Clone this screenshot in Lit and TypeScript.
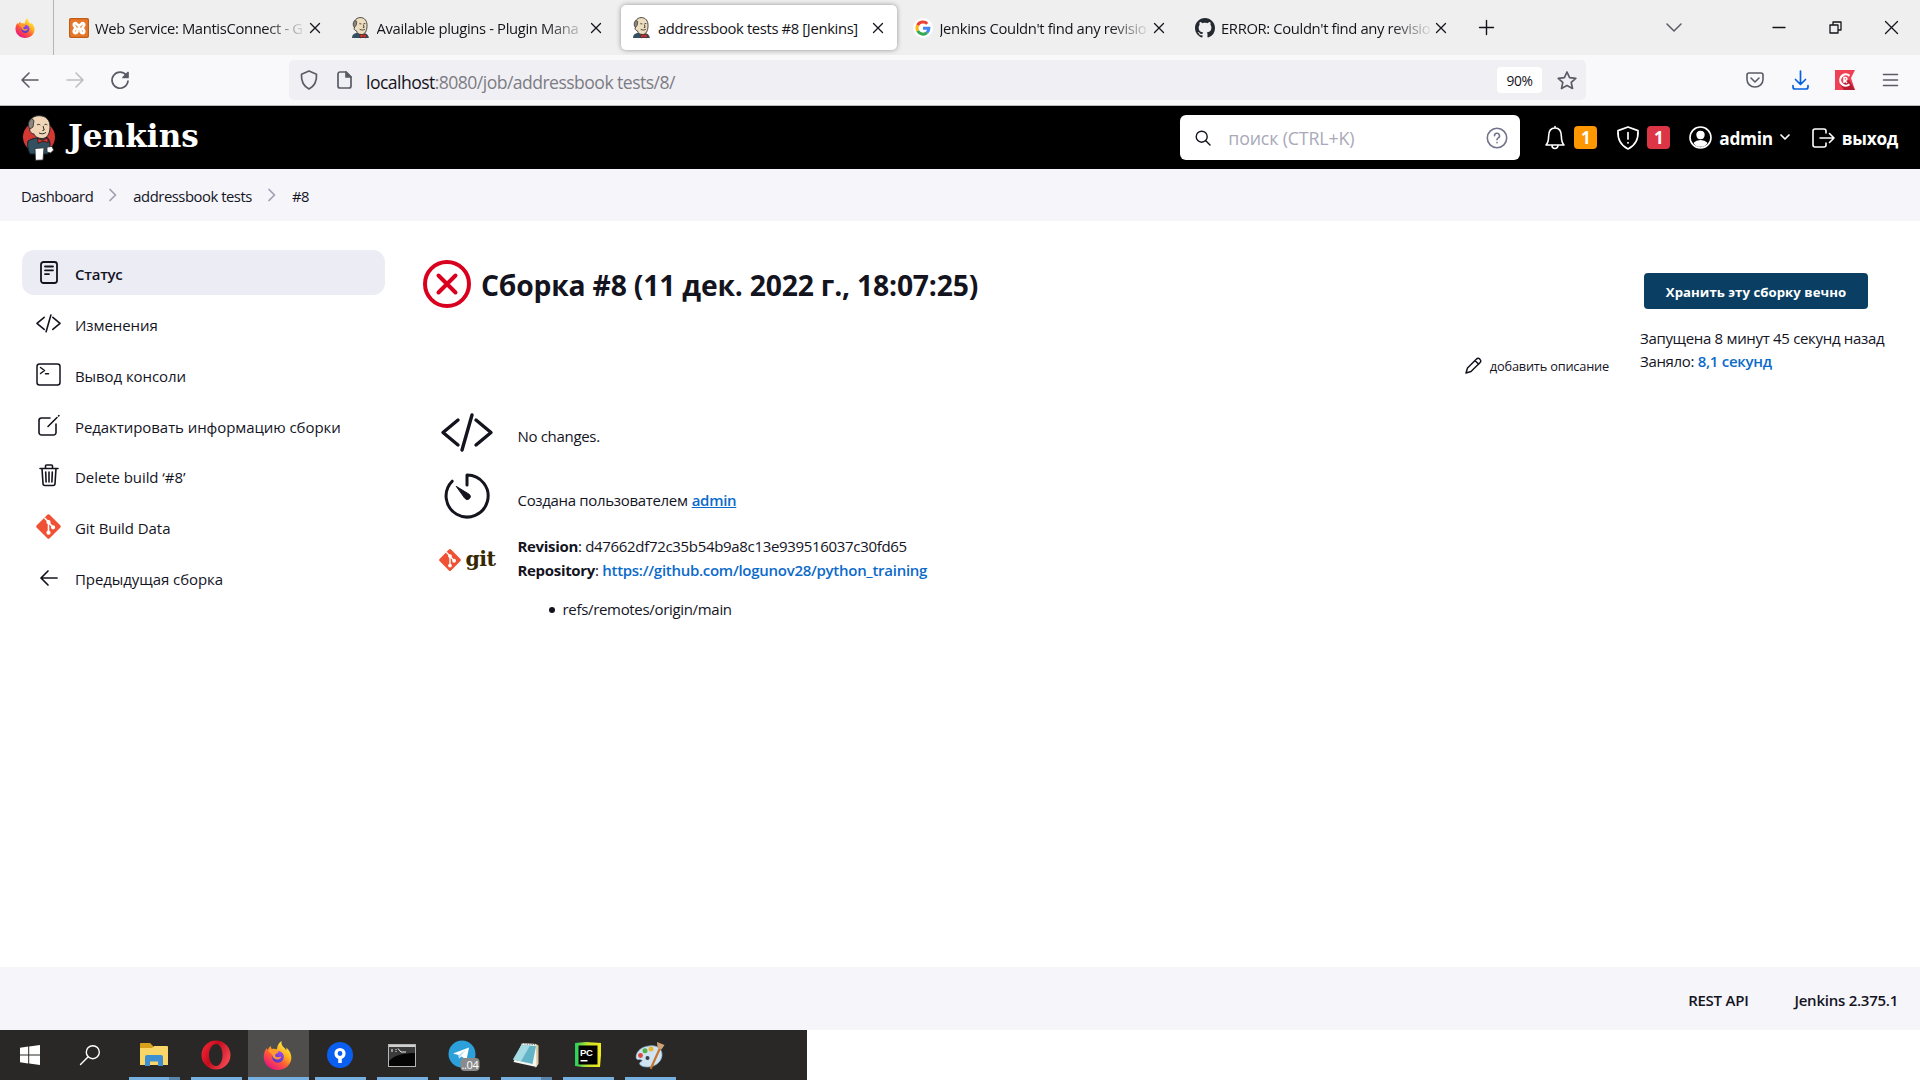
import { LitElement, html, svg, css, TemplateResult } from "lit";
import { customElement } from "lit/decorators.js";

/* ---------- line icons ---------- */
const stroke = (w: number, h: number, vb: string, sw: number, body: TemplateResult) => html`
  <svg width=${w} height=${h} viewBox=${vb} fill="none" stroke="currentColor" stroke-width=${sw}
    stroke-linecap="round" stroke-linejoin="round">${body}</svg>`;

const closeIcon = stroke(12, 12, "0 0 12 12", 1.3, svg`<path d="M1.5 1.5l9 9M10.500 1.500l-9 9"/>`);
const chevronRight = stroke(8, 14, "0 0 8 14", 1.7, svg`<path d="M1 1.500L6.500 7L1 12.500"/>`);
const codeIcon = (w: number, sw: number) =>
  stroke(w, w * 0.75, "0 0 52 39", sw, svg`<path d="M17 7L2 19.500L17 32M35 7L50 19.500L35 32M31 2L21 37"/>`);

/* ---------- colour pictures ---------- */
const firefox = (s: number) => html`
  <svg width=${s} height=${s} viewBox="0 0 32 32">
    <defs>
      <linearGradient id="fa" x1=".85" y1=".1" x2=".25" y2=".95">
        <stop offset="0" stop-color="#fff04a"/><stop offset=".35" stop-color="#ffb21f"/>
        <stop offset=".62" stop-color="#ff5b36"/><stop offset="1" stop-color="#e8177f"/>
      </linearGradient>
      <linearGradient id="fb" x1=".8" y1="0" x2=".3" y2="1">
        <stop offset="0" stop-color="#a24af0"/><stop offset="1" stop-color="#5136c8"/>
      </linearGradient>
    </defs>
    <path fill="url(#fa)" d="M20.500 0c-.7 3.300.6 5.200 2.800 7.400 1.200 1 1.900 2 2.200 3 .5-1 .4-2.200.2-3.200 3.600 3 5.600 7 5.600 11.300C31.300 26 24.700 32 16.300 32 7.600 32 .8 25.700.8 17.700c0-4 1-7.200 3.300-10.100.1 1 .4 1.600.9 2.200C5.800 8 7 6.600 8.600 5.500c0 1.300.4 2.500 1.200 3.300 2-.5 3.900-.3 5.600.4C15.600 5.300 17.500 2 20.500 0z"/>
    <circle cx="16.500" cy="17.500" r="6.600" fill="url(#fb)"/>
    <path fill="#ff9a2c" d="M5.500 10.500c2.200-1.600 5.300-2 8.500-.6 1 .5 2.600 1.700 3.300 2-.3 1.600-3 1.800-3.800 3.200-.6 1.400.4 2.700 2.200 2.800 2.200.1 3-.8 4.600-.4-1 2.600-4.500 3.600-7.200 2.200-2-1.100-3-3.200-3-5-1.200-.6-2.600-2.300-4.600-4.200z"/>
  </svg>`;

const butlerHead = html`
  <svg width="19" height="21" viewBox="0 0 19 21">
    <path fill="#335061" d="M1 21c0-3 1.500-4.600 5-5.200l7 .4c3 .5 4.600 2 4.900 4.800z"/>
    <path fill="#eedec0" stroke="#3a3530" stroke-width=".9" d="M3.600 10C2 5 4.500.8 9 .6c4.800-.2 7.300 3.500 7 8.600-.1 4.500-2 8.300-5.300 8.300-3.200 0-4.500-1.300-5.200-3.600C3.500 13.500 2.300 11.500 3.600 10z"/>
    <path fill="#8a8580" stroke="#3a3530" stroke-width=".7" d="M3.500 10.500C1.700 9 1.600 5.500 3.600 3.500L5.800 4.400 5.300 8z"/>
    <path fill="none" stroke="#3a3530" stroke-width=".9" d="M8.300 6.700l2 .2M12.600 6.500l1.800.2M12.300 7.500l.8 2.800-1.300.4M8.700 12.300c2 1 3.500.9 5.200 0"/>
    <path fill="#d33833" stroke="#5a1010" stroke-width=".5" d="M9 17.200l3 1 3-1.200v4l-3-1.200L9 21z"/>
  </svg>`;

const butler = html`
  <svg class="butler" width="34" height="46" viewBox="0 0 34 46">
    <ellipse cx="17" cy="22" rx="16" ry="15.500" fill="#d33833"/>
    <path fill="#335061" stroke="#10202a" stroke-width="1" d="M6 26c3-2 7-3 10-3l9-.5c2 1.600 3 3.600 3 7l-2 9.500H8C6 35.500 5 30 6 26z"/>
    <path fill="#f0d6b7" stroke="#2b2b2b" stroke-width="1" d="M8 13C6 6 10 .8 16.500.7 24 .5 28.300 5 28 12.500c-.2 6.500-3 11-8 11-4 0-7-1.800-8.200-4.600C8.700 18.500 7 15.500 8 13z"/>
    <path fill="#8b867f" stroke="#2b2b2b" stroke-width=".8" d="M8 14C5.500 11 6 6 9.500 3.600L12 5.500 11 12z"/>
    <path fill="none" stroke="#2b2b2b" stroke-width="1" d="M15 10c1-.8 2.300-.8 3.300 0M22.500 9.700c.9-.6 2-.5 2.800.2M21 11l1.200 4-1.800.6M17 18c2.700 1.200 5 1 7-.6"/>
    <path fill="#d33833" stroke="#3d0c0c" stroke-width=".8" d="M15.500 23.500l5 1.700 5.200-2.400.5 5-5-1.700-5 2.200z"/>
    <path fill="#fff" stroke="#2b2b2b" stroke-width=".8" d="M13 33.500l9-.7-1 12.200-7.500.3z"/>
    <path fill="#fff" stroke="#2b2b2b" stroke-width=".8" d="M25 32l5-.5 1.600 3.500-3 3-3.600-1z"/>
  </svg>`;

const gitDiamond = (s: number) => html`
  <svg width=${s} height=${s} viewBox="0 0 26 26">
    <rect x="4.200" y="4.200" width="17.600" height="17.600" rx="1.600" transform="rotate(45 13 13)" fill="#f05033"/>
    <g stroke="#fff" stroke-width="1.500" fill="#fff">
      <path fill="none" d="M9 4.600l4 4v10M13 9l4.200 4.600"/>
      <circle cx="13" cy="8.800" r="1.300"/><circle cx="13" cy="19" r="1.300"/><circle cx="17.400" cy="13.800" r="1.300"/>
    </g>
  </svg>`;

const xampp = html`
  <svg width="20" height="20" viewBox="0 0 20 20">
    <rect width="20" height="20" rx="2" fill="#e5782b"/><rect x=".6" y=".6" width="18.800" height="18.800" rx="1.800" fill="none" stroke="#c35c17" stroke-width="1.200"/>
    <path fill="none" stroke="#fff" stroke-width="2.700" stroke-linecap="round" stroke-linejoin="round"
      d="M8 6.200C6.500 4.600 4.600 5 4.800 7 4.900 8.600 6.400 8.600 6.400 10S4.900 11.600 4.800 13.200C4.700 15.600 7.500 15.600 8.400 13.600L8.600 11.200 10 10.200 11.400 11.200 11.600 13.600C12.500 15.600 15.300 15.600 15.200 13.200 15.100 11.600 13.600 11.400 13.600 10S15.100 8.600 15.200 7C15.400 5 13.500 4.600 12 6.200L10 8z"/>
  </svg>`;

const google = html`
  <svg width="20" height="20" viewBox="0 0 20 20"><circle cx="10" cy="10" r="10" fill="#fff"/>
    <g fill="none" stroke-width="3">
      <path stroke="#ea4335" d="M4.600 7.300A6 6 0 0 1 14.300 5.800"/><path stroke="#fbbc05" d="M4.600 7.300A6 6 0 0 0 4.700 12.900"/>
      <path stroke="#34a853" d="M4.700 12.900A6 6 0 0 0 14 14.600"/><path stroke="#4285f4" d="M10 10.200h5.900A6 6 0 0 1 14 14.600"/>
    </g></svg>`;

const github = html`
  <svg width="20" height="20" viewBox="0 0 16 16"><path fill="#24292f" d="M8 0C3.580 0 0 3.580 0 8c0 3.540 2.290 6.530 5.470 7.590.4.070.55-.17.55-.38 0-.19-.01-.82-.01-1.490-2.010.37-2.530-.49-2.690-.94-.09-.23-.48-.94-.82-1.130-.28-.15-.68-.52-.01-.53.63-.01 1.080.58 1.230.82.72 1.210 1.870.87 2.330.66.070-.52.28-.87.51-1.070-1.780-.2-3.640-.89-3.640-3.950 0-.87.31-1.590.82-2.150-.08-.2-.36-1.020.08-2.120 0 0 .67-.21 2.200.82.64-.18 1.320-.27 2-.27s1.360.09 2 .27c1.530-1.040 2.200-.82 2.200-.82.44 1.100.16 1.920.08 2.120.51.56.82 1.270.82 2.150 0 3.070-1.870 3.750-3.650 3.950.29.25.54.73.54 1.480 0 1.070-.01 1.930-.01 2.200 0 .21.15.46.55.38A8.010 8.010 0 0 0 16 8c0-4.420-3.580-8-8-8z"/></svg>`;

interface Tab { icon: TemplateResult; title: string; active?: boolean }
const tabs: Tab[] = [
  { icon: xampp, title: "Web Service: MantisConnect - G" },
  { icon: butlerHead, title: "Available plugins - Plugin Mana" },
  { icon: butlerHead, title: "addressbook tests #8 [Jenkins]", active: true },
  { icon: google, title: "Jenkins Couldn't find any revisio" },
  { icon: github, title: "ERROR: Couldn't find any revisio" },
];

const tasks: { icon: TemplateResult; label: string; active?: boolean }[] = [
  {
    icon: stroke(18, 23, "0 0 18 23", 1.8, svg`<rect x="1" y="1" width="16" height="21" rx="2.500"/><path d="M5 5.500h8M5 9.300h8M5 13.100h4"/>`),
    label: "Статус", active: true,
  },
  { icon: codeIcon(25, 3.3), label: "Изменения" },
  {
    icon: stroke(25, 23, "0 0 25 23", 1.5, svg`<rect x="1" y="1" width="23" height="21" rx="2.500"/><path d="M4.500 4.500L8.500 7.500L4.500 10.500M9.500 10.700h3"/>`),
    label: "Вывод консоли",
  },
  {
    icon: stroke(22, 22, "0 0 22 22", 1.6, svg`<path d="M12 4H3.500A2.500 2.500 0 0 0 1 6.500V18.500A2.500 2.500 0 0 0 3.500 21H15.500A2.500 2.500 0 0 0 18 18.500V10M10 12.500L19 3.500M20.600 1.900l.3-.3"/>`),
    label: "Редактировать информацию сборки",
  },
  {
    icon: stroke(20, 23, "0 0 20 23", 1.6, svg`<path d="M1 4.500h18M3 4.500l1 15a2 2 0 0 0 2 2h8a2 2 0 0 0 2-2l1-15M6.500 4.500V2a1 1 0 0 1 1-1h5a1 1 0 0 1 1 1V4.500M10 8v10M6.700 8l.4 10M13.300 8l-.4 10"/>`),
    label: "Delete build ‘#8’",
  },
  { icon: gitDiamond(27), label: "Git Build Data" },
  { icon: stroke(18, 16, "0 0 18 16", 1.7, svg`<path d="M8 1L1 8l7 7M1 8h16"/>`), label: "Предыдущая сборка" },
];

const folder = html`
  <svg width="28" height="24" viewBox="0 0 28 24">
    <path fill="#d9a11b" d="M0 1a1 1 0 0 1 1-1h9l3 3v4H0z"/><path fill="#f9d667" d="M0 5h12l2-2h13a1 1 0 0 1 1 1v18H0z"/>
    <path fill="#3d8fd1" d="M5 23V14a2 2 0 0 1 2-2h14a2 2 0 0 1 2 2v9h-5v-4.500h-8V23z"/>
  </svg>`;
const opera = html`
  <svg width="30" height="30" viewBox="0 0 30 30">
    <defs><linearGradient id="op" x1="0" x2="1" y1="0" y2=".5"><stop offset="0" stop-color="#ff2b3c"/><stop offset=".5" stop-color="#c40c1c"/><stop offset="1" stop-color="#f0424e"/></linearGradient></defs>
    <path fill="url(#op)" fill-rule="evenodd" d="M15 .5a14.500 14.500 0 1 0 0 29a14.500 14.500 0 1 0 0-29zM15 4c4 0 6.500 5 6.500 11S19 26 15 26S8 21 8 15S11 4 15 4z"/>
  </svg>`;
const sourcetree = html`
  <svg width="26" height="26" viewBox="0 0 26 26"><circle cx="13" cy="13" r="13" fill="#0a5ff0"/>
    <circle cx="13" cy="11.500" r="4" fill="none" stroke="#fff" stroke-width="3.200"/><path fill="#fff" d="M11.200 14h3.600v7h-3.600z"/></svg>`;
const cmd = html`
  <svg width="28" height="23" viewBox="0 0 28 23"><rect x=".5" y=".5" width="27" height="22" fill="#050505" stroke="#b5b5b5"/>
    <path fill="#cfcfcf" d="M1 1h26v2H1z"/><path fill="#3a3a3a" d="M1 3h26v6C17 9 6 11 1 17z"/>
    <path stroke="#eee" fill="none" d="M4 5v3M8 5v1M8 7v1M10 4.500l3 3.500h5"/></svg>`;
const telegram = html`
  <svg width="32" height="31" viewBox="0 0 32 31"><circle cx="14" cy="14" r="13.500" fill="#2ba0da"/>
    <path fill="#fff" d="M5 13.500L21 7.500 18.500 20 13.500 16.500 11 18.500 10.500 15z"/><path fill="#b9dcf0" d="M10.500 15l7.500-5-5.500 6L11 18.500z"/>
    <rect x="12.500" y="18" width="19" height="13" rx="4" fill="#8a8a8a"/>
    <text x="22" y="28.500" text-anchor="middle" font-family="Open Sans, sans-serif" font-size="11" fill="#fff">..04</text></svg>`;
const notepad = html`
  <svg width="28" height="27" viewBox="0 0 28 27"><path fill="#d9c9a0" d="M24 2l2.500 1.500V22l-3 4z"/><path fill="#f5f5f0" d="M10 1l14 1 .5 23-23-5z"/>
    <path fill="#62b4c6" d="M9.500 3L24 4 20.500 22 1 17.500z"/><path fill="#a6dbe4" d="M9.500 3L18 3.600 9 19.300 1 17.500z"/>
    <path stroke="#777" stroke-width="1.400" stroke-dasharray="1.200 1.200" d="M10 1.500l14 1"/></svg>`;
const pycharm = html`
  <svg width="26" height="26" viewBox="0 0 26 26">
    <defs><linearGradient id="pc"><stop offset="0" stop-color="#20d060"/><stop offset=".5" stop-color="#c6e02a"/><stop offset="1" stop-color="#f2ea1c"/></linearGradient></defs>
    <path fill="url(#pc)" d="M0 1l11-1 15 1v12l-1 12H8L0 24z"/><rect x="3.500" y="3.500" width="19" height="19" fill="#000"/>
    <text x="5" y="13.500" font-family="Liberation Sans, sans-serif" font-weight="bold" font-size="9.500" fill="#fff">PC</text><path fill="#fff" d="M5.500 18h7v1.500h-7z"/></svg>`;
const paint = html`
  <svg width="30" height="29" viewBox="0 0 30 29"><path fill="#cfe3f3" stroke="#8fb3cf" stroke-width=".7" d="M14 5C22 3.500 27.500 8 27 14.500 26.500 21 20 26 12.500 26 6 26 2 22.500 6.500 20.500 8.500 19.500 6 18 3 18.500-.5 19 0 6.500 14 5z"/>
    <circle cx="5.500" cy="14.500" r="2.400" fill="#d8483c"/><circle cx="10" cy="9.800" r="2.500" fill="#55b04a"/><circle cx="16" cy="8" r="2.500" fill="#efb32f"/><circle cx="12.500" cy="17" r="2" fill="#3a3f48"/>
    <path stroke="#c8742c" stroke-width="2.200" stroke-linecap="round" d="M25.500 6L16 27"/><path fill="#cda27a" d="M22 1l7.500 3-3 4.500-4-1.800z"/></svg>`;

const apps: { icon: TemplateResult; active?: boolean; split?: boolean }[] = [
  { icon: folder, split: true }, { icon: opera }, { icon: firefox(29), active: true }, { icon: sourcetree }, { icon: cmd },
  { icon: telegram }, { icon: notepad, split: true }, { icon: pycharm }, { icon: paint },
];

@customElement("app-root")
export class AppRoot extends LitElement {
  static styles = css`
    :host { display: flex; flex-direction: column; width: 1920px; height: 1080px; overflow: hidden; background: #fff;
      color: #14141f; font-family: "Open Sans", "Noto Sans", sans-serif; font-size: 15px; letter-spacing: -.32px; white-space: nowrap; }
    * { box-sizing: border-box; }
    svg { display: block; flex: none; overflow: visible; }
    .c { display: flex; align-items: center; justify-content: center; flex: none; }

    .tabs { display: flex; height: 55px; flex: none; background: #efefef; color: #15141a; }
    .pinned { width: 54px; border-right: 1px solid #b4b4b8; padding-right: 4px; }
    .strip { display: flex; padding: 5px 0 5px 4px; }
    .tab { display: flex; align-items: center; width: 276px; height: 45px; margin-right: 5.500px; padding: 0 13.500px 0 10.500px; border-radius: 5px; }
    .tab.active { background: #fff; box-shadow: 0 0 5px rgba(0, 0, 0, .38); }
    .fav { width: 20px; height: 21px; }
    .title { flex: 1; margin: 1px 2px 0 6.500px; font-size: 14.800px; letter-spacing: -.36px;
      -webkit-mask-image: linear-gradient(to right, #000 calc(100% - 42px), transparent); }
    .active .title { -webkit-mask-image: none; }
    .plus { width: 30px; margin-left: 6px; }
    .winbtns { display: flex; margin-left: auto; }
    .winbtns .c { width: 56.500px; }
    .winbtns .down { width: 60px; margin-right: 47px; color: #5b5b66; }

    .nav { display: flex; align-items: center; height: 51px; flex: none; background: #f9f9fb; border-bottom: 1px solid #b9bab9; color: #5b5b66; padding-left: 7px; }
    .nav > .c { width: 45px; }
    .dim { color: #bdbdc4; }
    .url { display: flex; align-items: center; width: 1297px; height: 40px; margin-left: 147px; padding: 0 9px 0 11px; background: #f0f0f4; border-radius: 5px; }
    .page { width: 16px; margin-left: 18px; }
    .address { margin-left: 14px; font-size: 17.600px; letter-spacing: -.55px; color: #7c7c84; padding-top: 3px; }
    .address b { font-weight: 400; color: #15141a; }
    .zoom { width: 45px; height: 26px; margin: 0 15px 0 auto; background: #fff; border-radius: 4px; color: #15141a; font-size: 13.800px; }
    .tools { display: flex; margin-left: auto; margin-right: 7.500px; }
    .tools .c { width: 45px; }
    .blue { color: #0561e0; }

    .header { display: flex; align-items: center; height: 63px; flex: none; background: #000; color: #fff; padding: 0 22px 0 22px; }
    .brand { font: bold 31px "DejaVu Serif", serif; letter-spacing: .1px; margin-left: 12px; padding-bottom: 4px; }
    .search { display: flex; align-items: center; width: 340px; height: 45px; margin-left: auto; background: #fff; border-radius: 6px; color: #14141f; padding: 0 12px 0 15px; }
    .hint { flex: 1; margin-left: 17px; font-size: 17.800px; letter-spacing: -.15px; color: #a9a9b8; padding-top: 1px; }
    .help { color: #73738c; }
    .actions { display: flex; align-items: center; font-weight: 700; font-size: 17.300px; letter-spacing: -.3px; margin-left: 24px; }
    .badge { width: 23px; height: 23px; border-radius: 4px; font-size: 17px; }
    .orange { background: #fe9700; margin: 0 19px 0 8px; }
    .red { background: #dc3545; margin: 0 19px 0 7px; }
    .user { margin: 0 7px 0 7px; padding-top: 1px; }
    .out { margin-left: 7px; padding-top: 1px; }
    .exit { margin-left: 22px; }

    .crumbs { display: flex; align-items: center; height: 52px; flex: none; background: #f5f5fa; padding-left: 21px; font-size: 14.800px; letter-spacing: -.45px; }
    .crumbs span { padding-top: 1px; }
    .crumbs svg { color: #9f9fb0; margin: 0 16px; }

    .main { display: flex; height: 746px; flex: none; }
    .side { width: 385px; padding: 29px 0 0 22px; letter-spacing: -.07px; }
    .task { display: flex; align-items: center; height: 45px; margin-bottom: 5.850px; border-radius: 12px; }
    .task.active { background: #ececf5; font-weight: 600; letter-spacing: -.25px; }
    .task .c { width: 53px; }
    .task span { padding-top: 3px; }
    .center { width: 1225px; padding: 39px 0 0 38px; }
    .headline { display: flex; align-items: center; height: 48px; }
    h1 { margin: 2px 0 0 10px; font-size: 28.300px; letter-spacing: -.2px; font-weight: 700; line-height: 1; }
    .describe { display: flex; align-items: center; justify-content: flex-end; gap: 8px; height: 20px; margin-top: 47px; padding-right: 1px; font-size: 12.800px; letter-spacing: -.2px; }
    .describe span { padding-top: 2px; }
    .rows { display: grid; grid-template-columns: 60px 1fr; column-gap: 20.500px; padding: 25px 0 0 14px; }
    .rows > .c { height: 64px; }
    .row { display: flex; align-items: center; height: 64px; padding-top: 7px; }
    a { color: #0b6aca; font-weight: 600; text-decoration: none; letter-spacing: -.28px; }
    a.u { text-decoration: underline; margin-left: 4px; }
    .wordmark { font: bold 20.500px/24px "DejaVu Serif", serif; color: #362701; margin-left: 3px; letter-spacing: -.5px; padding-bottom: 3px; }
    .git { line-height: 24px; padding-top: 6px; }
    .git ul { margin: 15px 0 0; padding: 0 0 0 31px; list-style: none; }
    .git li { display: flex; align-items: center; gap: 8px; }
    .git li::before { content: ""; width: 6px; height: 6px; border-radius: 50%; background: #14141f; margin-top: 2px; }
    .info { padding: 52px 0 0 30px; line-height: 23px; }
    .keep { width: 224px; height: 36px; margin: 0 0 18px 4px; padding-top: 2px; border-radius: 4px; background: #0a3f63; color: #fff; font-size: 13.200px; letter-spacing: .04px; font-weight: 700; }

    .footer { display: flex; align-items: center; justify-content: flex-end; gap: 46px; height: 63px; flex: none; background: #f5f5fa; padding: 2px 22px 0 0; font-weight: 600; letter-spacing: -.25px; }
    .taskbar { display: flex; width: 807px; height: 50px; flex: none; background: #292826; }
    .taskbar > .c { width: 60px; color: #fff; }
    .apps { display: flex; margin-left: 4px; }
    .app { display: flex; flex-direction: column; width: 62px; padding: 0 6px 0 5px; }
    .app .c { height: 47px; padding: 3px 2px 0 0; }
    .app .bar { display: flex; height: 3px; background: #76b0e0; }
    .app.active { background: #4f4e4d; padding: 0; width: 61px; margin-right: 1px; }
    .split .bar { border-right: 11px solid #5a85ab; }
  `;

  render() {
    return html`
      <div class="tabs">
        <div class="pinned c">${firefox(20)}</div>
        <div class="strip">${tabs.map((t) => html`
          <div class="tab ${t.active ? "active" : ""}"><div class="fav c">${t.icon}</div><div class="title">${t.title}</div>${closeIcon}</div>`)}
        </div>
        <div class="plus c">${stroke(15, 15, "0 0 15 15", 1.4, svg`<path d="M7.500 .5v14M.5 7.500h14"/>`)}</div>
        <div class="winbtns">
          <div class="c down">${stroke(16, 9, "0 0 16 9", 1.5, svg`<path d="M1 1l7 7 7-7"/>`)}</div>
          <div class="c">${stroke(12, 2, "0 0 12 2", 1.4, svg`<path d="M0 .5h12"/>`)}</div>
          <div class="c">${stroke(13, 13, "0 0 13 13", 1.3, svg`<path d="M1 4h8v8H1zM4 4V1h8v8H9"/>`)}</div>
          <div class="c">${stroke(13, 13, "0 0 13 13", 1.3, svg`<path d="M.5 .5l12 12M12.500 .5l-12 12"/>`)}</div>
        </div>
      </div>

      <div class="nav">
        <div class="c">${stroke(18, 16, "0 0 18 16", 1.6, svg`<path d="M8 1L1 8l7 7M1 8h16"/>`)}</div>
        <div class="c dim">${stroke(18, 16, "0 0 18 16", 1.6, svg`<path d="M10 1l7 7-7 7M17 8H1"/>`)}</div>
        <div class="c">${stroke(18, 18, "0 0 18 18", 1.7, svg`<path d="M15.500 4.500A8 8 0 1 0 17 10"/><path fill="currentColor" d="M17 1.500v5h-5z"/>`)}</div>
        <div class="url">
          ${stroke(18, 20, "0 0 18 20", 1.7, svg`<path d="M9 1l7.500 3.200c.4 6-1.500 11.500-7.500 14.800C3 15.700 1.100 10.200 1.500 4.200z"/>`)}
          <div class="c page">${stroke(15, 18, "0 0 15 18", 1.7, svg`<path d="M9 1H3a2 2 0 0 0-2 2v12a2 2 0 0 0 2 2h9a2 2 0 0 0 2-2V6z"/><path fill="currentColor" d="M9 1v5h5z"/>`)}</div>
          <span class="address"><b>localhost</b>:8080/job/addressbook tests/8/</span>
          <span class="zoom c">90%</span>
          ${stroke(20, 19, "0 0 20 19", 1.7, svg`<path d="M10 1l2.600 5.600 6.200.7-4.600 4.100 1.300 6.100L10 14.400l-5.500 3.100 1.300-6.100L1.200 7.300l6.200-.7z"/>`)}
        </div>
        <div class="tools">
          <div class="c">${stroke(18, 16, "0 0 18 16", 1.6, svg`<path d="M3 1h12a2 2 0 0 1 2 2v4.500a8 7.500 0 0 1-16 0V3a2 2 0 0 1 2-2zM5 6l4 4 4-4"/>`)}</div>
          <div class="c blue">${stroke(17, 19, "0 0 17 19", 1.7, svg`<path d="M8.500 0v13M3.500 8.500l5 5 5-5M1 14.500v1.500a2 2 0 0 0 2 2h11a2 2 0 0 0 2-2v-1.500"/>`)}</div>
          <div class="c"><svg width="20" height="20" viewBox="0 0 20 20"><path fill="#ef4056" d="M0 0h20l-4 8 4 12H0z"/><path fill="#b81c30" d="M5 14l9-4 6 10H9z"/><path fill="none" stroke="#fff" stroke-width="2.200" d="M14.500 5.800a5.600 5.600 0 1 0 0 8.400"/><path fill="none" stroke="#fff" stroke-width="1.500" d="M9 13V7.500h1.500a1.400 1.400 0 0 1 0 2.800H9.500l2.500 2.700"/></svg></div>
          <div class="c">${stroke(15, 13, "0 0 15 13", 1.6, svg`<path d="M.5 .5h14M.5 6h14M.5 11.500h14"/>`)}</div>
        </div>
      </div>

      <div class="header">
        ${butler}<span class="brand">Jenkins</span>
        <div class="search">
          ${stroke(16, 16, "0 0 16 16", 1.4, svg`<circle cx="6.700" cy="6.700" r="5.500"/><path d="M10.800 10.800l4.200 4.200"/>`)}
          <span class="hint">поиск (CTRL+K)</span>
          <span class="help">${stroke(22, 22, "0 0 22 22", 1.6, svg`<circle cx="11" cy="11" r="9.700"/><path d="M8.500 8.700a2.500 2.500 0 1 1 3.700 2.200c-.8.500-1.200.9-1.200 1.900M11 15.600v.2"/>`)}</span>
        </div>
        <div class="actions">
          ${stroke(22, 25, "0 0 22 25", 1.6, svg`<path d="M11 1.500v1M2 20c2-2 2.600-4 2.600-8.500C4.600 6 7 3 11 3s6.400 3 6.400 8.500C17.400 16 18 18 20 20zM8 20.500a3 3 0 0 0 6 0"/>`)}
          <span class="badge c orange">1</span>
          ${stroke(24, 24, "0 0 24 24", 1.7, svg`<path d="M12 1l10 3.600c.5 8-2 14.500-10 18.400C4 19.100 1.500 12.600 2 4.600z"/><path d="M12 6.500v6.500M12 16.600v.3"/>`)}
          <span class="badge c red">1</span>
          ${stroke(23, 23, "0 0 23 23", 1.6, svg`<circle cx="11.500" cy="11.500" r="10.500"/><path fill="currentColor" d="M11.500 5.500c5 0 4 7 0 7s-5-7 0-7zM5.500 17c2.500-3 9.500-3 12 0-2.500 4-9.500 4-12 0z"/>`)}
          <span class="user">admin</span>
          ${stroke(10, 7, "0 0 10 7", 1.7, svg`<path d="M1 1l4 4 4-4"/>`)}
          <span class="exit">${stroke(23, 20, "0 0 23 20", 1.6, svg`<path d="M14 5V3a2 2 0 0 0-2-2H3a2 2 0 0 0-2 2v14a2 2 0 0 0 2 2h9a2 2 0 0 0 2-2v-2M8 10h14M17.500 5.500L22 10l-4.500 4.500"/>`)}</span>
          <span class="out">выход</span>
        </div>
      </div>

      <div class="crumbs"><span>Dashboard</span>${chevronRight}<span>addressbook tests</span>${chevronRight}<span>#8</span></div>

      <div class="main">
        <div class="side">${tasks.map((t) => html`
          <div class="task ${t.active ? "active" : ""}"><div class="c">${t.icon}</div><span>${t.label}</span></div>`)}
        </div>
        <div class="center">
          <div class="headline">
            <svg width="48" height="48" viewBox="0 0 48 48" fill="none" stroke="#d9001f" stroke-width="4" stroke-linecap="round"><circle cx="24" cy="24" r="22"/><path d="M15.500 15.500l17 17M32.500 15.500l-17 17"/></svg>
            <h1>Сборка #8 (11 дек. 2022 г., 18:07:25)</h1>
          </div>
          <div class="describe">
            ${stroke(17, 17, "0 0 17 17", 1.5, svg`<path d="M1 16l1.500-5L11.500 2a2 2 0 0 1 3.200 0l.4.500a2 2 0 0 1 0 3L6 14.500zM10 3.500l3.700 3.700"/>`)}
            <span>добавить описание</span>
          </div>
          <div class="rows">
            <div class="c">${codeIcon(52, 3.4)}</div><div class="row">No changes.</div>
            <div class="c">${stroke(46, 46, "0 0 46 46", 3, svg`<path d="M23 12V2A21 21 0 1 1 8.200 8.200"/><path fill="currentColor" stroke-width="1" d="M12.500 13.500L25.500 21.500a3 3 0 1 1-4.500 4z"/>`)}</div>
            <div class="row">Создана пользователем <a class="u">admin</a></div>
            <div class="c">${gitDiamond(24)}<span class="wordmark">git</span></div>
            <div class="git">
              <div><b>Revision</b>: d47662df72c35b54b9a8c13e939516037c30fd65</div>
              <div><b>Repository</b>: <a>https://github.com/logunov28/python_training</a></div>
              <ul><li>refs/remotes/origin/main</li></ul>
            </div>
          </div>
        </div>
        <div class="info">
          <div class="keep c">Хранить эту сборку вечно</div>
          <div>Запущена 8 минут 45 секунд назад</div>
          <div>Заняло: <a>8,1 секунд</a></div>
        </div>
      </div>

      <div class="footer"><span>REST API</span><span>Jenkins 2.375.1</span></div>

      <div class="taskbar">
        <div class="c"><svg width="20" height="20" viewBox="0 0 20 20"><path fill="#fff" d="M0 2.800l8.200-1.200v7.900H0zM9.200 1.500L20 0v9.500H9.200zM0 10.500h8.200v7.900L0 17.200zM9.200 10.500H20V20L9.200 18.500z"/></svg></div>
        <div class="c">${stroke(20, 20, "0 0 20 20", 1.4, svg`<circle cx="12.800" cy="7.200" r="6.500"/><path d="M8.200 11.800L.5 19.500"/>`)}</div>
        <div class="apps">${apps.map((a) => html`
          <div class="app ${a.active ? "active" : ""} ${a.split ? "split" : ""}"><div class="c">${a.icon}</div><div class="bar"></div></div>`)}
        </div>
      </div>
    `;
  }
}
